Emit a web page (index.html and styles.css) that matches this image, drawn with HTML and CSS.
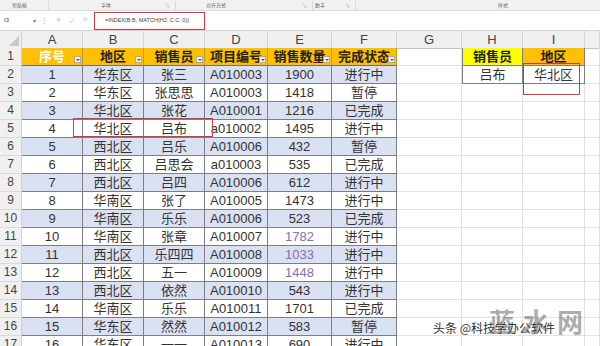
FILE: index.html
```html
<!DOCTYPE html>
<html lang="zh">
<head>
<meta charset="utf-8">
<link rel="stylesheet" href="styles.css">
</head>
<body>
<div class="app">
  <div class="ribbon">
    <span class="rg g1">剪贴板</span><span class="sep"></span>
    <span class="rg g2">字体</span><span class="launch">↘</span><span class="sep"></span>
    <span class="rg g3">对齐方式</span><span class="launch">↘</span><span class="sep"></span>
    <span class="rg g4">数字</span><span class="launch">↘</span><span class="sep"></span>
    <span class="rg g5">样式</span>
  </div>
  <div class="fbar">
    <div class="namebox"><span>I3</span><span class="dd">▾</span></div>
    <div class="dots">⋮</div>
    <div class="ficons"><span>✕</span><span>✓</span><span class="fx">fx</span></div>
    <div class="formula">=INDEX(B:B, MATCH(H2, C:C, 0))</div>
  </div>
  <div class="sheet">
    <div class="row hdr">
      <div class="rn corner"><span class="tri"></span></div>
      <div class="ch">A</div><div class="ch">B</div><div class="ch">C</div><div class="ch">D</div><div class="ch">E</div><div class="ch">F</div><div class="ch">G</div><div class="ch">H</div><div class="ch">I</div><div class="ch"></div>
    </div>
    <div class="row">
      <div class="rn">1</div>
      <div class="c t th white">序号<i class="fb"></i></div>
      <div class="c t th">地区<i class="fb"></i></div>
      <div class="c t th">销售员<i class="fb"></i></div>
      <div class="c t th">项目编号<i class="fb"></i></div>
      <div class="c t th">销售数量<i class="fb"></i></div>
      <div class="c t th">完成状态<i class="fb"></i></div>
      <div class="c"></div>
      <div class="c lk yel">销售员</div>
      <div class="c lk th">地区</div>
      <div class="c"></div>
    </div>
    <div class="row band">
      <div class="rn">2</div>
      <div class="c t">1</div><div class="c t">华东区</div><div class="c t">张三</div><div class="c t">A010003</div><div class="c t">1900</div><div class="c t">进行中</div>
      <div class="c"></div><div class="c lk">吕布</div><div class="c lk">华北区</div><div class="c"></div>
    </div>
    <div class="row">
      <div class="rn">3</div>
      <div class="c t">2</div><div class="c t">华东区</div><div class="c t">张思思</div><div class="c t">A010003</div><div class="c t">1418</div><div class="c t">暂停</div>
      <div class="c"></div><div class="c"></div><div class="c"></div><div class="c"></div>
    </div>
    <div class="row band">
      <div class="rn">4</div>
      <div class="c t">3</div><div class="c t">华北区</div><div class="c t">张花</div><div class="c t">A010001</div><div class="c t">1216</div><div class="c t">已完成</div>
      <div class="c"></div><div class="c"></div><div class="c"></div><div class="c"></div>
    </div>
    <div class="row">
      <div class="rn">5</div>
      <div class="c t">4</div><div class="c t">华北区</div><div class="c t">吕布</div><div class="c t">a010002</div><div class="c t">1495</div><div class="c t">进行中</div>
      <div class="c"></div><div class="c"></div><div class="c"></div><div class="c"></div>
    </div>
    <div class="row band">
      <div class="rn">6</div>
      <div class="c t">5</div><div class="c t">西北区</div><div class="c t">吕乐</div><div class="c t">A010006</div><div class="c t">432</div><div class="c t">暂停</div>
      <div class="c"></div><div class="c"></div><div class="c"></div><div class="c"></div>
    </div>
    <div class="row">
      <div class="rn">7</div>
      <div class="c t">6</div><div class="c t">西北区</div><div class="c t">吕思会</div><div class="c t">a010003</div><div class="c t">535</div><div class="c t">已完成</div>
      <div class="c"></div><div class="c"></div><div class="c"></div><div class="c"></div>
    </div>
    <div class="row band">
      <div class="rn">8</div>
      <div class="c t">7</div><div class="c t">西北区</div><div class="c t">吕四</div><div class="c t">A010006</div><div class="c t">612</div><div class="c t">进行中</div>
      <div class="c"></div><div class="c"></div><div class="c"></div><div class="c"></div>
    </div>
    <div class="row">
      <div class="rn">9</div>
      <div class="c t">8</div><div class="c t">华南区</div><div class="c t">张了</div><div class="c t">A010005</div><div class="c t">1473</div><div class="c t">进行中</div>
      <div class="c"></div><div class="c"></div><div class="c"></div><div class="c"></div>
    </div>
    <div class="row band">
      <div class="rn">10</div>
      <div class="c t">9</div><div class="c t">华南区</div><div class="c t">乐乐</div><div class="c t">A010006</div><div class="c t">523</div><div class="c t">已完成</div>
      <div class="c"></div><div class="c"></div><div class="c"></div><div class="c"></div>
    </div>
    <div class="row">
      <div class="rn">11</div>
      <div class="c t">10</div><div class="c t">华南区</div><div class="c t">张章</div><div class="c t">A010007</div><div class="c t pur">1782</div><div class="c t">进行中</div>
      <div class="c"></div><div class="c"></div><div class="c"></div><div class="c"></div>
    </div>
    <div class="row band">
      <div class="rn">12</div>
      <div class="c t">11</div><div class="c t">西北区</div><div class="c t">乐四四</div><div class="c t">A010008</div><div class="c t pur">1033</div><div class="c t">进行中</div>
      <div class="c"></div><div class="c"></div><div class="c"></div><div class="c"></div>
    </div>
    <div class="row">
      <div class="rn">13</div>
      <div class="c t">12</div><div class="c t">西北区</div><div class="c t">五一</div><div class="c t">A010009</div><div class="c t pur">1448</div><div class="c t">进行中</div>
      <div class="c"></div><div class="c"></div><div class="c"></div><div class="c"></div>
    </div>
    <div class="row band">
      <div class="rn">14</div>
      <div class="c t">13</div><div class="c t">西北区</div><div class="c t">依然</div><div class="c t">A010010</div><div class="c t">543</div><div class="c t">进行中</div>
      <div class="c"></div><div class="c"></div><div class="c"></div><div class="c"></div>
    </div>
    <div class="row">
      <div class="rn">15</div>
      <div class="c t">14</div><div class="c t">华南区</div><div class="c t">乐乐</div><div class="c t">A010011</div><div class="c t">1701</div><div class="c t">已完成</div>
      <div class="c"></div><div class="c"></div><div class="c"></div><div class="c"></div>
    </div>
    <div class="row band">
      <div class="rn">16</div>
      <div class="c t">15</div><div class="c t">华东区</div><div class="c t">然然</div><div class="c t">A010012</div><div class="c t">583</div><div class="c t">暂停</div>
      <div class="c"></div><div class="c"></div><div class="c"></div><div class="c"></div>
    </div>
    <div class="row">
      <div class="rn">17</div>
      <div class="c t">16</div><div class="c t">华东区</div><div class="c t">一一</div><div class="c t">A010013</div><div class="c t">690</div><div class="c t">进行中</div>
      <div class="c"></div><div class="c"></div><div class="c"></div><div class="c"></div>
    </div>
  </div>
  <div class="redbox rb-formula"></div>
  <div class="redbox rb-row5"></div>
  <div class="redbox rb-i2"></div>
  <div class="watermark"><span class="wm-small">头条 @科技学办公软件</span><span class="wm-big">蓝水网</span></div>
</div>
</body>
</html>
```
FILE: styles.css
```css
html, body { margin: 0; padding: 0; background: #fff; }
.app {
  position: relative;
  width: 600px;
  height: 346px;
  overflow: hidden;
  font-family: "Liberation Sans", "Noto Sans CJK SC", sans-serif;
  color: #333;
}
.ribbon {
  height: 10px;
  background: #f1f1f1;
  border-bottom: 1px solid #dadada;
  display: flex;
  align-items: center;
  font-size: 5px;
  color: #666;
  font-family: "Noto Sans CJK SC", sans-serif;
  line-height: 10px;
}
.rg { display: block; }
.g1 { margin-left: 12px; width: 34px; }
.g2 { margin-left: 50px; width: 64px; }
.g3 { margin-left: 28px; width: 96px; }
.g4 { margin-left: 0; width: 30px; }
.g5 { margin-left: 140px; }
.launch { font-size: 5px; color: #999; width: 8px; }
.sep { display: block; width: 1px; height: 9px; background: #d8d8d8; margin: 0 2px; }
.fbar {
  height: 19px;
  border-bottom: 1px solid #d4d4d4;
  display: flex;
  align-items: center;
  background: #fff;
}
.namebox {
  width: 40px;
  display: flex;
  justify-content: space-between;
  padding: 0 4px;
  font-size: 6px;
  color: #444;
  box-sizing: border-box;
}
.namebox .dd { color: #777; font-size: 6px; }
.dots { width: 8px; font-size: 7px; color: #aaa; text-align: center; }
.ficons { display: flex; gap: 9px; width: 46px; padding-left: 8px; font-size: 6px; color: #b4b4b4; box-sizing: border-box; }
.ficons .fx { font-style: italic; }
.formula { font-size: 5.5px; color: #444; padding-left: 10px; border-left: 1px solid #ddd; height: 13px; line-height: 13px; }
.sheet { display: flex; flex-direction: column; }
.row {
  display: grid;
  grid-template-columns: 22px 61px 61px 61px 63px 64px 65px 65px 61px 62px 1fr;
  height: 18px;
}
.row.hdr { height: 17px; background: #efefef; }
.row > div { box-sizing: border-box; position: relative; }
.rn {
  background: #f0f0f0;
  border-right: 1px solid #d0d0d0;
  border-bottom: 1px solid #dadada;
  font-size: 12px;
  line-height: 17px;
  text-align: center;
  color: #444;
}
.corner { position: relative; }
.tri {
  position: absolute; right: 2px; bottom: 2px;
  width: 0; height: 0;
  border-left: 10px solid transparent;
  border-bottom: 10px solid #c8c8c8;
}
.ch {
  border-right: 1px solid #d4d4d4;
  border-bottom: 1px solid #c6c6c6;
  text-align: center;
  font-size: 13px;
  line-height: 17px;
  color: #444;
}
.c {
  border-right: 1px solid #e1e1e1;
  border-bottom: 1px solid #e1e1e1;
  text-align: center;
  font-size: 13px;
  line-height: 17px;
  white-space: nowrap;
}
.c.t { border-right-color: #7d7d86; border-bottom-color: #7d7d86; }
.band .c.t { background: #d9e1f2; }
.th { background: #ffc000; font-weight: bold; color: #222; }
.c.t.th { border-right-color: #c99a1a; border-bottom-color: #6f6f78; }
.white { color: #fff; }
.yel { background: #ffff00; font-weight: bold; color: #222; }
.c.lk { border-right-color: #7d7d86; border-bottom-color: #7d7d86; border-left: 1px solid #7d7d86; }
.c.lk + .c.lk { border-left: none; }
.pur { color: #8a6db4; }
.fb {
  position: absolute; right: 1px; bottom: 2px;
  width: 7px; height: 7px;
  background: #f2f2f2;
  border: 1px solid #a8a8a8;
  box-sizing: border-box;
}
.fb::after {
  content: ""; position: absolute; left: 1px; top: 2px;
  border-left: 2px solid transparent; border-right: 2px solid transparent;
  border-top: 2px solid #555;
}
.redbox { position: absolute; border: 1.5px solid #d9363e; box-sizing: border-box; }
.rb-formula { left: 94px; top: 12px; width: 111px; height: 18px; }
.rb-row5 { left: 73px; top: 118px; width: 140px; height: 19px; }
.rb-i2 { left: 523px; top: 63px; width: 57px; height: 32px; }
.watermark {
  position: absolute; left: 433px; top: 314px;
  white-space: nowrap;
  font-family: "Noto Sans CJK SC", sans-serif;
}
.wm-small { font-size: 12px; line-height: 16px; color: #333; text-shadow: 0 0 2px #fff; }
.wm-big {
  position: absolute; left: 56px; top: -12px;
  white-space: nowrap;
  font-size: 26px; line-height: 38px; font-weight: bold; letter-spacing: 8px;
  color: rgba(90, 90, 90, 0.5);
}
```
